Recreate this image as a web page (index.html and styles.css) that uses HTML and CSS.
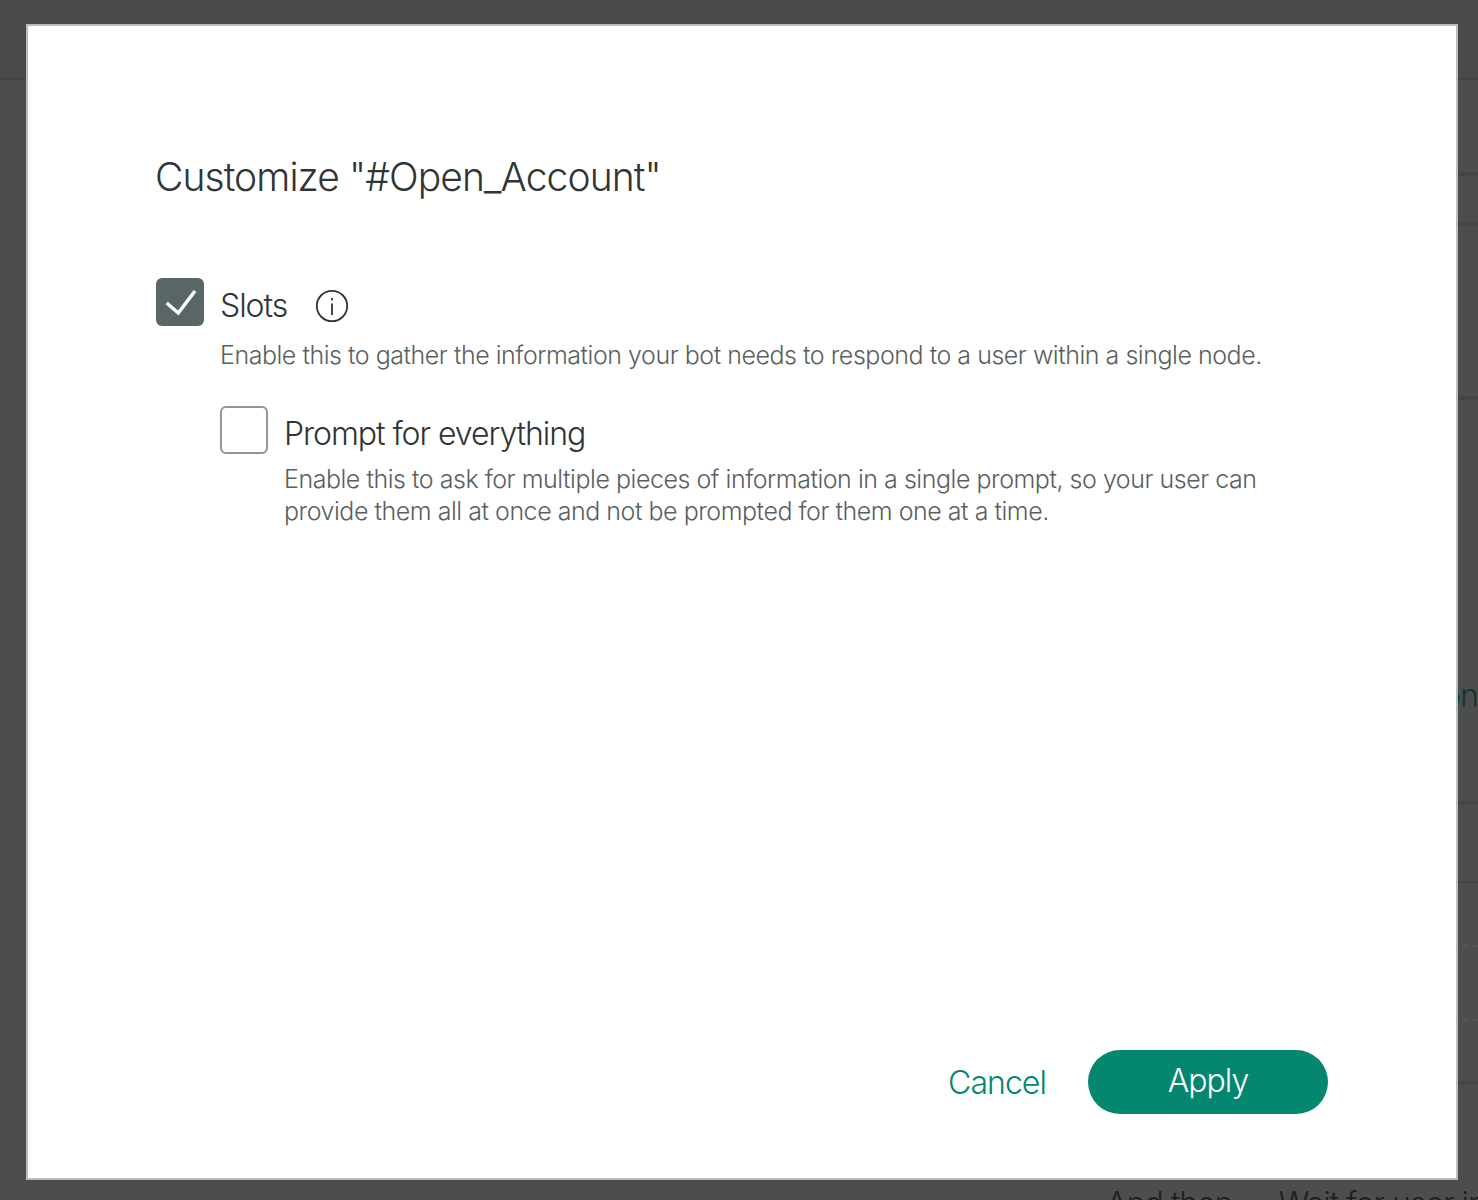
FILE: index.html
```html
<!DOCTYPE html>
<html lang="en">
<head>
<meta charset="utf-8">
<title>Customize</title>
<link rel="stylesheet" href="styles.css">
</head>
<body>
<div class="page">
  <div class="page-top"></div>
  <div class="side">
    <div class="row r1"></div>
    <div class="row r2"></div>
    <div class="row r3"></div>
    <div class="row r4"><span class="peek">on</span></div>
    <div class="row r5"></div>
    <div class="row r6 dashed"></div>
    <div class="row r7 dashed"></div>
    <div class="row r8"></div>
    <div class="row r9"><span class="then">And then</span><span class="wait">Wait for user input</span></div>
  </div>
</div>
<section class="modal">
  <h1 class="title">Customize "#Open_Account"</h1>
  <div class="option">
    <span class="box checked">
      <svg width="48" height="48" viewBox="0 0 48 48"><path d="M10.700 25 L22.300 35 L39 13" fill="none" stroke="#fff" stroke-width="3.500"/></svg>
    </span>
    <div class="body">
      <div class="label-row">
        <span class="label">Slots</span>
        <svg class="info" width="34" height="34" viewBox="0 0 34 34"><circle cx="17" cy="17" r="15.200" fill="none" stroke="#2f3535" stroke-width="1.800"/><path d="M17 14.500V26" stroke="#2f3535" stroke-width="1.800"/><path d="M17 9v2.500" stroke="#2f3535" stroke-width="1.800"/></svg>
      </div>
      <p class="desc">Enable this to gather the information your bot needs to respond to a user within a single node.</p>
      <div class="option nested">
        <span class="box"></span>
        <div class="body">
          <div class="label-row"><span class="label">Prompt for everything</span></div>
          <p class="desc wrap">Enable this to ask for multiple pieces of information in a single prompt, so your user can provide them all at once and not be prompted for them one at a time.</p>
        </div>
      </div>
    </div>
  </div>
  <div class="actions">
    <button class="cancel">Cancel</button>
    <button class="apply">Apply</button>
  </div>
</section>
</body>
</html>
```
FILE: styles.css
```css
html, body { margin: 0; height: 1200px; overflow: hidden; background: #4d4d4d; }
body { font-family: Inter, "Liberation Sans", sans-serif; font-weight: 300; }
.page { height: 1200px; display: flex; flex-direction: column; overflow: hidden; }
.page-top { height: 78px; background: #4a4a4a; border-bottom: 2px solid #444; flex: none; }
.side { display: flex; flex-direction: column; align-items: stretch; margin-left: 1040px; }
.row { border-bottom: 4px solid #454545; box-sizing: border-box; flex: none; }
.r1 { height: 96px; }
.r2 { height: 50px; }
.r3 { height: 174px; }
.r4 { height: 405px; display: flex; justify-content: flex-end; padding-top: 280px; }
.r5 { height: 78px; border-bottom-width: 2px; }
.r6 { height: 64px; border-bottom: 2px dashed #555; }
.r7 { height: 74px; border-bottom: 2px dashed #555; }
.r8 { height: 64px; }
.r9 { height: 115px; display: flex; padding: 100px 0 0 66px; white-space: nowrap; font-size: 32px; letter-spacing: -1px; line-height: 38px; color: #1f1f1f; border: 0; gap: 46px; }
.peek { font-size: 32px; color: #0a3a30; line-height: 32px; height: 32px; letter-spacing: -0.9px; }

.modal { position: absolute; left: 26px; top: 24px; width: 1432px; height: 1156px; box-sizing: border-box; background: #fff; border: 2px solid #b4bfbf; padding: 126px 128px 64px; display: flex; flex-direction: column; color: #2f3535; }
.title { margin: 0 0 0 -1px; font-size: 39px; line-height: 50px; font-weight: 300; letter-spacing: -0.92px; color: #303535; }
.option { display: flex; gap: 16px; align-items: flex-start; }
.modal > .option { margin-top: 76px; }
.body { flex: 1; min-width: 0; }
.box { width: 48px; height: 48px; flex: none; box-sizing: border-box; border: 2px solid #8a9898; border-radius: 6px; background: #fff; display: block; }
.box.checked { background: #5a6666; border: 0; }
.box svg { display: block; }
.label-row { display: flex; align-items: center; gap: 28px; height: 54px; padding-top: 2px; box-sizing: border-box; }
.label { font-size: 32px; line-height: 52px; font-weight: 300; letter-spacing: -1.05px; color: #2f3535; }
.info { flex: none; }
.desc { margin: 7px 0 0; font-size: 25px; line-height: 32px; letter-spacing: -0.47px; color: #5a5f5f; font-weight: 300; }
.nested { margin-top: 35px; }
.wrap { margin-top: 3px; width: 1000px; }
.actions { margin-top: auto; display: flex; justify-content: flex-end; align-items: center; gap: 42px; }
button { font-family: inherit; font-weight: 300; font-size: 32px; letter-spacing: -0.95px; border: 0; padding: 0; cursor: pointer; }
.cancel { background: none; color: #04866f; }
.apply { width: 240px; height: 64px; border-radius: 32px; background: #04866f; color: #fff; padding-bottom: 3px; }
```
